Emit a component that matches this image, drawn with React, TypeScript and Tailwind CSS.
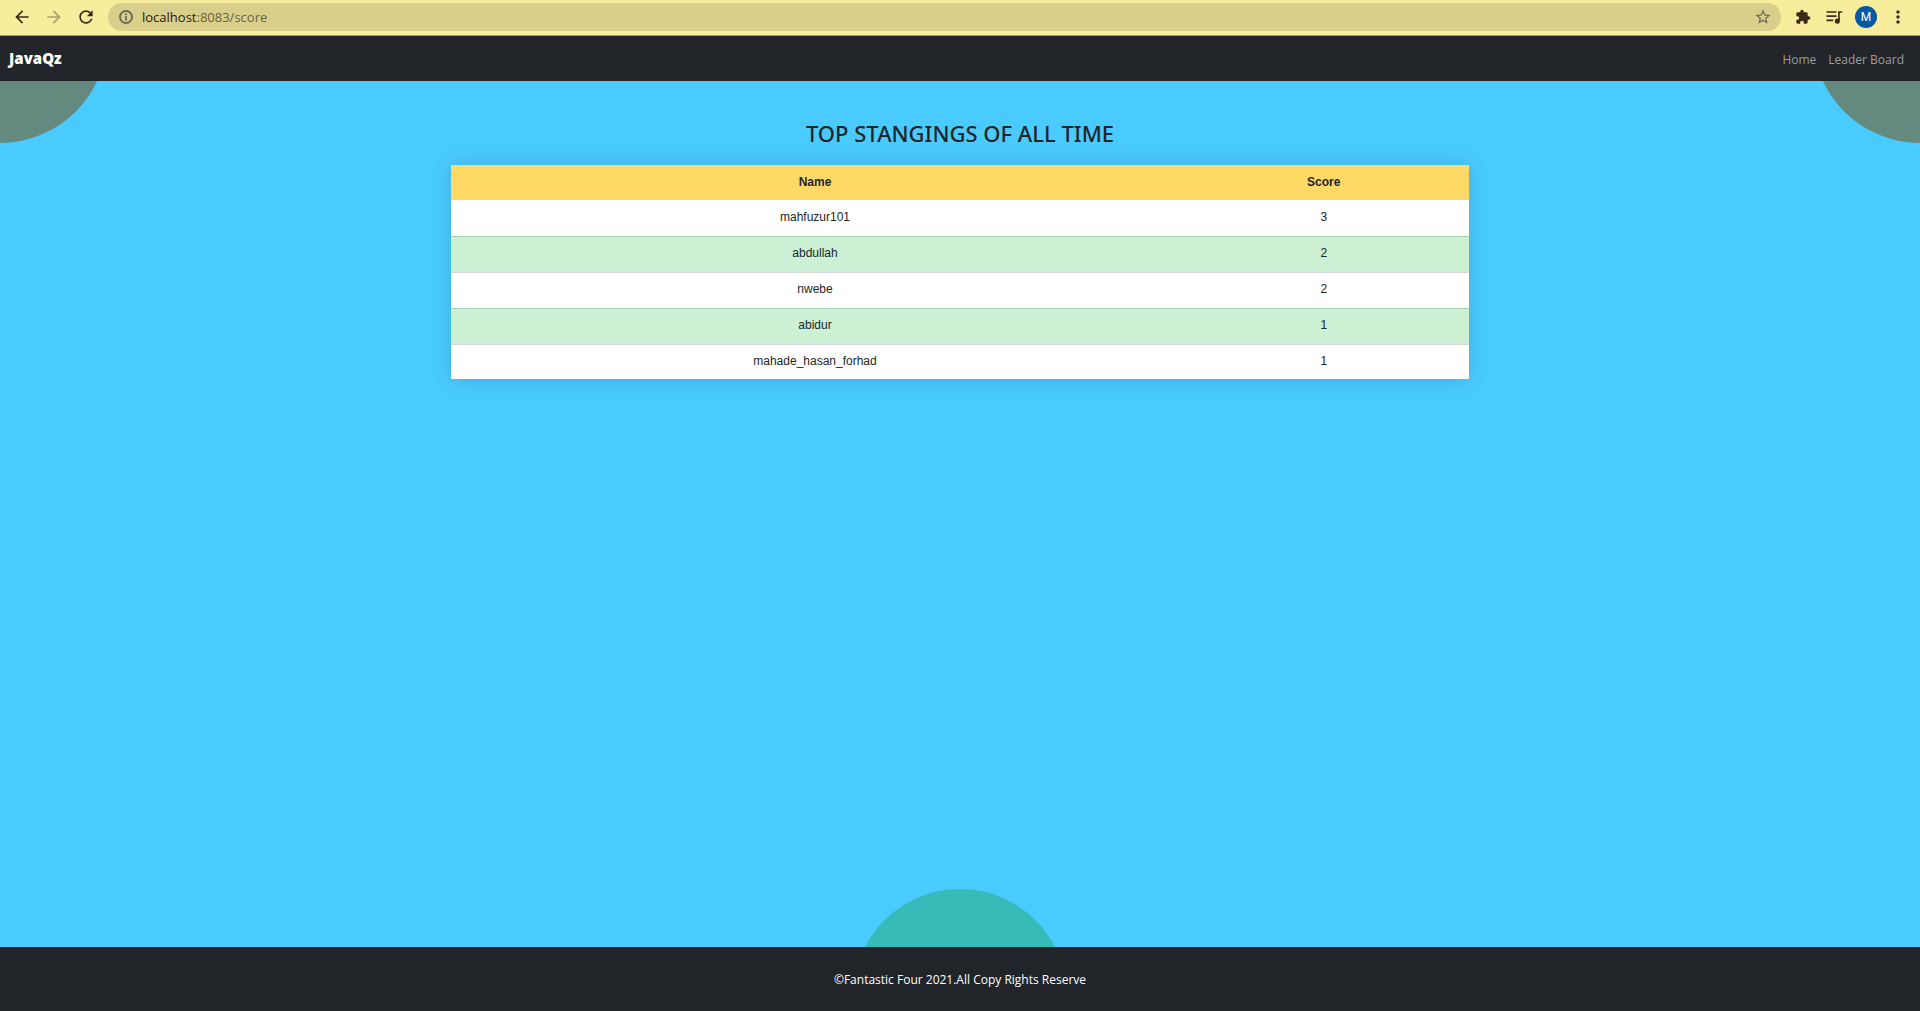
import React from "react";

const standings = [
  { name: "mahfuzur101", score: 3 },
  { name: "abdullah", score: 2 },
  { name: "nwebe", score: 2 },
  { name: "abidur", score: 1 },
  { name: "mahade_hasan_forhad", score: 1 },
];

function Icon({ d, className }: { d: string; className: string }) {
  return (
    <svg viewBox="0 0 24 24" fill="currentColor" aria-hidden="true" className={className}>
      <path d={d} />
    </svg>
  );
}

function BrowserBar() {
  return (
    <div className="flex h-9 items-center border-b border-[#a69d6c] bg-[#f8ec9d] pr-3 pb-px pl-3 text-[#3b2b17]">
      <div className="flex items-center gap-3">
        <button type="button" aria-label="Back" className="flex h-5 w-5 items-center justify-center">
          <Icon className="h-5 w-5 shrink-0" d="M20 11H7.83l5.59-5.59L12 4l-8 8 8 8 1.41-1.41L7.83 13H20v-2z" />
        </button>
        <button type="button" aria-label="Forward" className="flex h-5 w-5 items-center justify-center text-[#aa9f69]">
          <Icon className="h-5 w-5 shrink-0" d="M12 4l-1.41 1.41L16.17 11H4v2h12.17l-5.58 5.59L12 20l8-8z" />
        </button>
        <button type="button" aria-label="Reload" className="flex h-5 w-5 items-center justify-center">
          <Icon
            className="h-5 w-5 shrink-0"
            d="M17.65 6.35C16.2 4.9 14.21 4 12 4c-4.42 0-7.99 3.58-7.99 8s3.57 8 7.99 8c3.73 0 6.84-2.55 7.73-6h-2.08c-.82 2.33-3.04 4-5.65 4-3.31 0-6-2.69-6-6s2.69-6 6-6c1.66 0 3.14.69 4.22 1.78L13 11h7V4l-2.35 2.35z"
          />
        </button>
      </div>
      <div className="ml-3 flex h-7 flex-1 items-center rounded-full bg-[#d9cf8a] pr-2 pl-2">
        <Icon
          className="h-5 w-5 shrink-0 p-[2px] text-[#5d5a55] [stroke:currentColor] [stroke-width:0.5]"
          d="M11 17h2v-6h-2v6zm1-15C6.48 2 2 6.48 2 12s4.48 10 10 10 10-4.48 10-10S17.52 2 12 2zm0 18c-4.41 0-8-3.59-8-8s3.59-8 8-8 8 3.59 8 8-3.59 8-8 8zM11 9h2V7h-2v2z"
        />
        <a
          href="#score"
          className="ml-1.5 flex-1 font-['Open_Sans','Noto_Sans',sans-serif] text-[13px] leading-5 text-[#6b6341]"
        >
          <span className="text-[#2b2113]">localhost</span>:8083/score
        </a>
        <button type="button" aria-label="Bookmark this page" className="text-[#6a665c]">
          <Icon
            className="h-5 w-5 p-[1px]"
            d="M22 9.24l-7.19-.62L12 2 9.19 8.63 2 9.24l5.46 4.73L5.82 21 12 17.27 18.18 21l-1.63-7.03L22 9.24zM12 15.4l-3.76 2.27 1-4.28-3.32-2.88 4.38-.38L12 6.1l1.71 4.04 4.38.38-3.32 2.88 1 4.28L12 15.4z"
          />
        </button>
      </div>
      <div className="ml-3 flex items-center gap-[11px]">
        <button type="button" aria-label="Extensions">
          <Icon
            className="h-5 w-5 p-[2px]"
            d="M20.5 11H19V7c0-1.1-.9-2-2-2h-4V3.500C13 2.120 11.880 1 10.500 1S8 2.120 8 3.500V5H4c-1.100 0-1.990.9-1.990 2v3.800H3.500c1.490 0 2.700 1.210 2.700 2.700s-1.210 2.700-2.700 2.700H2V20c0 1.100.9 2 2 2h3.800v-1.500c0-1.490 1.210-2.700 2.700-2.700 1.490 0 2.700 1.210 2.700 2.700V22H17c1.100 0 2-.9 2-2v-4h1.500c1.380 0 2.500-1.120 2.500-2.500S21.880 11 20.500 11z"
          />
        </button>
        <button type="button" aria-label="Media controls">
          <Icon className="h-5 w-5" d="M3 5h12v2H3zM3 10h12v2H3zM3 15h8v2H3zM17 5h5v2h-3v10a3 3 0 1 1-2-2.830z" />
        </button>
        <button
          type="button"
          aria-label="Profile"
          className="flex h-[22px] w-[22px] items-center justify-center rounded-full bg-[#0559a4] font-['Roboto',sans-serif] text-xs text-white"
        >
          M
        </button>
        <button type="button" aria-label="Menu">
          <Icon
            className="h-5 w-5"
            d="M12 8c1.100 0 2-.9 2-2s-.9-2-2-2-2 .9-2 2 .9 2 2 2zm0 2c-1.100 0-2 .9-2 2s.9 2 2 2 2-.9 2-2-.9-2-2-2zm0 6c-1.100 0-2 .9-2 2s.9 2 2 2 2-.9 2-2-.9-2-2-2z"
          />
        </button>
      </div>
    </div>
  );
}

export default function App() {
  return (
    <div className="flex min-h-screen flex-col bg-[#4acbff] font-['Open_Sans','Noto_Sans',sans-serif] text-[#212529]">
      <BrowserBar />
      <nav className="flex h-[45px] items-center justify-between bg-[#212529] pr-4 pl-[9px]">
        <a href="#top" className="text-[15px] font-extrabold text-white">
          JavaQz
        </a>
        <div className="flex gap-3 pt-0.5 text-xs text-[#9b9d9e]">
          <a href="#home">Home</a>
          <a href="#leaders">Leader Board</a>
        </div>
      </nav>
      <main className="relative flex-1 overflow-hidden">
        <div className="absolute -top-[152px] -left-[107px] h-[214px] w-[214px] rounded-full bg-[#64897f]" />
        <div className="absolute -top-[152px] -right-[107px] h-[214px] w-[214px] rounded-full bg-[#64897f]" />
        <div className="absolute -bottom-[156px] left-1/2 h-[214px] w-[214px] -translate-x-1/2 rounded-full bg-[#36bbb9]" />
        <h1 className="mt-9 text-center font-['Noto_Sans','Open_Sans',sans-serif] text-[22px] leading-8 font-medium">
          TOP STANGINGS OF ALL TIME
        </h1>
        <table className="relative mx-auto mt-4 w-[53%] table-fixed border-collapse text-center font-['Liberation_Sans',Arial,sans-serif] text-xs shadow-[0_0_20px_rgba(0,0,0,0.15)]">
          <thead>
            <tr className="h-[35px] bg-[#ffd966]">
              <th scope="col" className="w-[71.500%] pb-0.5 font-bold">
                Name
              </th>
              <th scope="col" className="pb-0.5 font-bold">
                Score
              </th>
            </tr>
          </thead>
          <tbody>
            {standings.map((row) => (
              <tr
                key={row.name}
                className="h-9 border-b border-[#a5d1ae] bg-white last:h-[35px] last:border-b-0 even:border-[#d5dad7] even:bg-[#cbf0d3]"
              >
                <td className="pb-0.5">{row.name}</td>
                <td className="pb-0.5">{row.score}</td>
              </tr>
            ))}
          </tbody>
        </table>
      </main>
      <footer className="flex h-16 items-center justify-center bg-[#212529] pt-0.5 text-xs text-white">
        ©Fantastic Four 2021.All Copy Rights Reserve
      </footer>
    </div>
  );
}
